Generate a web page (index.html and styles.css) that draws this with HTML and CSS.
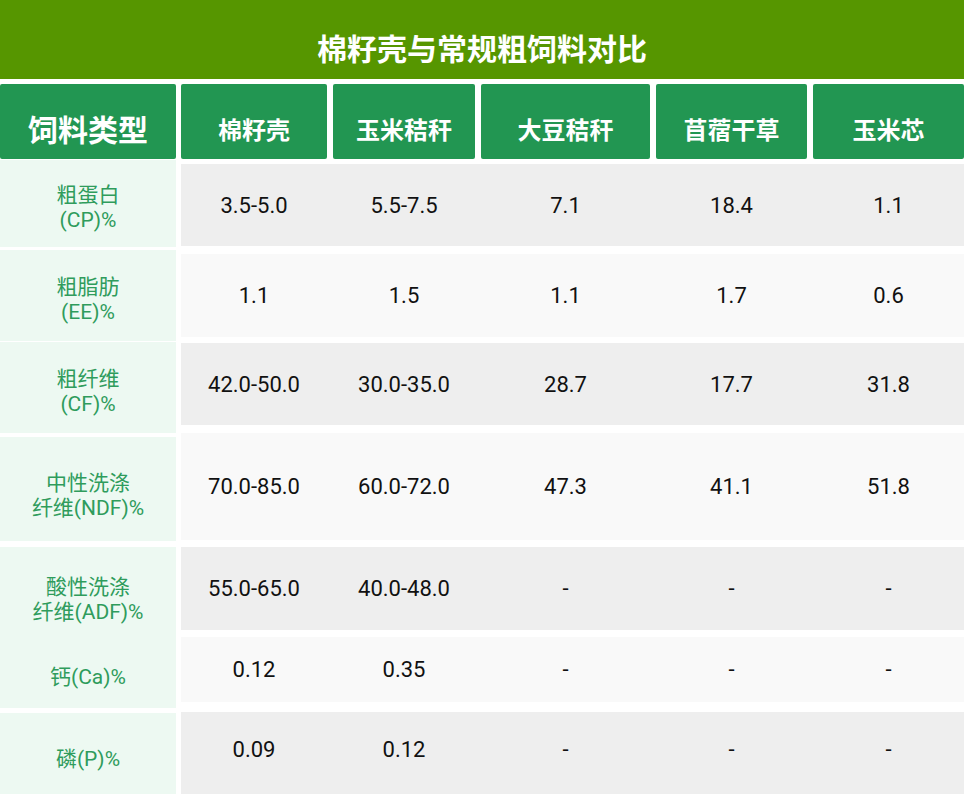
FILE: index.html
```html
<!DOCTYPE html>
<html lang="zh-CN">
<head>
<meta charset="utf-8">
<title>棉籽壳与常规粗饲料对比</title>
<link rel="stylesheet" href="styles.css">
</head>
<body>
<div class="sheet">
  <div class="title">棉籽壳与常规粗饲料对比</div>
  <div class="head">
    <div class="hcell hcell-main">饲料类型</div>
    <div class="cols">
      <div class="hcell">棉籽壳</div>
      <div class="hcell">玉米秸秆</div>
      <div class="hcell">大豆秸秆</div>
      <div class="hcell">苜蓿干草</div>
      <div class="hcell">玉米芯</div>
    </div>
  </div>
  <div class="body">
    <div class="labels">
      <div class="lcell l1"><div class="lab">粗蛋白<br>(CP)%</div></div>
      <div class="lcell l2"><div class="lab">粗脂肪<br>(EE)%</div></div>
      <div class="lcell l3"><div class="lab">粗纤维<br>(CF)%</div></div>
      <div class="lcell l4"><div class="lab">中性洗涤<br>纤维(NDF)%</div></div>
      <div class="lcell l5">
        <div class="lab">酸性洗涤<br>纤维(ADF)%</div>
        <div class="lab">钙(Ca)%</div>
      </div>
      <div class="lcell l6"><div class="lab">磷(P)%</div></div>
    </div>
    <div class="data">
      <div class="drow gray d1 cols">
        <div class="dcell">3.5-5.0</div><div class="dcell">5.5-7.5</div><div class="dcell">7.1</div><div class="dcell">18.4</div><div class="dcell">1.1</div>
      </div>
      <div class="drow light d2 cols">
        <div class="dcell">1.1</div><div class="dcell">1.5</div><div class="dcell">1.1</div><div class="dcell">1.7</div><div class="dcell">0.6</div>
      </div>
      <div class="drow gray d3 cols">
        <div class="dcell">42.0-50.0</div><div class="dcell">30.0-35.0</div><div class="dcell">28.7</div><div class="dcell">17.7</div><div class="dcell">31.8</div>
      </div>
      <div class="drow light d4 cols">
        <div class="dcell">70.0-85.0</div><div class="dcell">60.0-72.0</div><div class="dcell">47.3</div><div class="dcell">41.1</div><div class="dcell">51.8</div>
      </div>
      <div class="drow gray d5 cols">
        <div class="dcell">55.0-65.0</div><div class="dcell">40.0-48.0</div><div class="dcell">-</div><div class="dcell">-</div><div class="dcell">-</div>
      </div>
      <div class="drow light d6 cols">
        <div class="dcell">0.12</div><div class="dcell">0.35</div><div class="dcell">-</div><div class="dcell">-</div><div class="dcell">-</div>
      </div>
      <div class="drow gray d7 cols">
        <div class="dcell">0.09</div><div class="dcell">0.12</div><div class="dcell">-</div><div class="dcell">-</div><div class="dcell">-</div>
      </div>
    </div>
  </div>
</div>
</body>
</html>
```
FILE: styles.css
```css
* { box-sizing: border-box; }
html, body { margin: 0; padding: 0; background: #ffffff; }
body { width: 964px; height: 794px; overflow: hidden; }

.sheet {
  width: 964px;
  font-family: Roboto, "Noto Sans CJK SC", sans-serif;
}

.title {
  height: 79px;
  background: #569600;
  color: #ffffff;
  font-family: "Noto Sans CJK SC", sans-serif;
  font-weight: 700;
  font-size: 30px;
  display: flex;
  align-items: center;
  justify-content: center;
  padding-top: 14px;
}

.head {
  display: flex;
  gap: 5px;
  margin-top: 5px;
  height: 75px;
}

.cols {
  display: grid;
  grid-template-columns: 146px 142px 169px 151px 1fr;
  column-gap: 6px;
  flex: 1;
}

.hcell {
  background: #229652;
  color: #ffffff;
  border-radius: 2px;
  font-family: "Noto Sans CJK SC", sans-serif;
  font-weight: 700;
  font-size: 24px;
  display: flex;
  align-items: center;
  justify-content: center;
  padding-top: 13px;
}

.hcell-main {
  width: 176px;
  flex: none;
  font-size: 30px;
}

.body {
  display: flex;
  gap: 5px;
}

.labels {
  width: 176px;
  flex: none;
  padding-top: 1px;
  display: flex;
  flex-direction: column;
}

.lcell {
  background: #edf9f2;
  color: #2f9c5c;
  font-size: 21px;
  line-height: 25px;
  text-align: center;
  display: flex;
  flex-direction: column;
  align-items: center;
  justify-content: center;
  padding-top: 8px;
}

.l1 { height: 87px; }
.l2 { height: 91px; margin-top: 3px; }
.l3 { height: 91px; margin-top: 1px; }
.l4 { height: 104px; margin-top: 4px; padding-top: 14px; }
.l5 { height: 161px; margin-top: 6px; justify-content: flex-start; padding-top: 28px; gap: 40px; }
.l6 { height: 81px; margin-top: 5px; padding-top: 12px; }

.data {
  flex: 1;
  padding-top: 5px;
  display: flex;
  flex-direction: column;
}

.drow { flex: none; }
.gray { background: #eeeeee; }
.light { background: #f9f9f9; }

.dcell {
  display: flex;
  align-items: center;
  justify-content: center;
  color: #111111;
  font-size: 22px;
}

.d1 { height: 82px; }
.d2 { height: 83px; margin-top: 8px; }
.d3 { height: 82px; margin-top: 6px; }
.d4 { height: 107px; margin-top: 8px; }
.d5 { height: 83px; margin-top: 7px; }
.d6 { height: 65px; margin-top: 7px; }
.d7 { height: 82px; margin-top: 10px; padding-bottom: 7px; }
```
